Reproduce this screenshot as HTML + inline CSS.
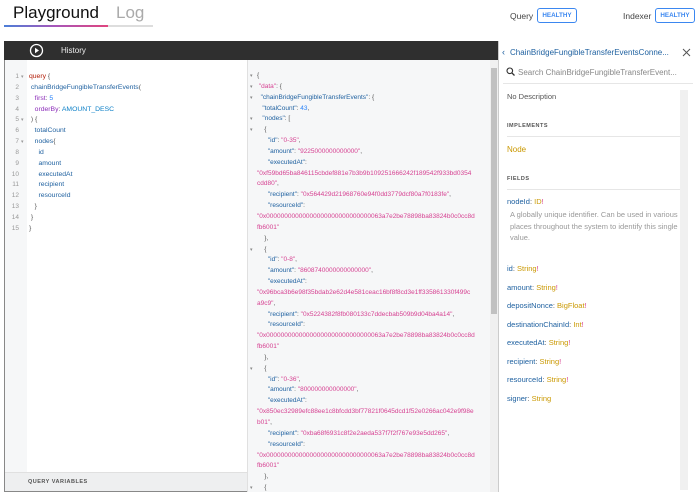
<!DOCTYPE html>
<html><head><meta charset="utf-8"><style>
*{margin:0;padding:0;box-sizing:border-box}
body{width:700px;height:493px;overflow:hidden;background:#fff;font-family:"Liberation Sans",sans-serif;position:relative}
.a{position:absolute;white-space:nowrap}
.ln{font-size:6.5px;line-height:10.85px}
.k{color:#b11a04}.f{color:#1f61a0}.ar{color:#8b2bb9}.en{color:#0b7fc7}.nm{color:#2882f9}
.s{color:#d64292}.rk{color:#1f61a0}.p{color:#555}
.num{color:#999}
.badge{position:absolute;height:15px;border:1px solid #3b87f0;border-radius:3px;color:#3b87f0;font-size:6.3px;font-weight:bold;line-height:13px;text-align:center;width:40px}
.dk{font-size:7.5px;color:#555}
.fn{color:#1f61a0}.ty{color:#ca9800}
</style></head><body>
<div class="a" style="left:13px;top:3px;font-size:17px;color:#111">Playground</div>
<div class="a" style="left:116px;top:3px;font-size:17px;color:#aaa">Log</div>
<div class="a" style="left:4px;top:25px;width:104px;height:2px;background:linear-gradient(90deg,#4b7fd8,#a855b8,#e0457e)"></div>
<div class="a" style="left:108px;top:25px;width:45px;height:2px;background:#ddd"></div>
<div class="a" style="left:510px;top:11px;font-size:8.5px;color:#444">Query</div>
<div class="badge" style="left:537px;top:8px">HEALTHY</div>
<div class="a" style="left:623px;top:11px;font-size:8.5px;color:#444">Indexer</div>
<div class="badge" style="left:655px;top:8px">HEALTHY</div>

<div class="a" style="left:4px;top:41px;width:690px;height:451px;border:1px solid #888;border-top:none"></div>
<div class="a" style="left:4px;top:41px;width:494px;height:19px;background:#2f2f2f"></div>
<svg class="a" style="left:29px;top:43px" width="15" height="15"><circle cx="7.5" cy="7.5" r="6" fill="none" stroke="#fff" stroke-width="1.3"/><path d="M6 4.8 L10 7.5 L6 10.2Z" fill="#fff"/></svg>
<div class="a" style="left:61px;top:46px;font-size:8px;color:#eee">History</div>

<div class="a" style="left:5px;top:60px;width:22px;height:412px;background:#f6f7f8"></div>
<div class="a" style="left:5px;top:472px;width:242px;height:19px;background:#eeeff0;border-top:1px solid #e0e0e0"></div>
<div class="a" style="left:28px;top:479px;font-size:5.5px;font-weight:bold;color:#555;letter-spacing:.5px">QUERY VARIABLES</div>

<div class="a ln num" style="left:5px;top:72px;width:14px;text-align:right">1<br>2<br>3<br>4<br>5<br>6<br>7<br>8<br>9<br>10<br>11<br>12<br>13<br>14<br>15</div>
<div class="a ln num" style="left:21px;top:72px;font-size:5px">▾<br><br><br><br>▾<br><br>▾</div>
<div class="a ln" style="left:29px;top:72px;font-size:6.8px">
<span class="k">query</span> <span class="p">{</span><br>
&nbsp;<span class="f">chainBridgeFungibleTransferEvents</span><span class="p">(</span><br>
&nbsp;&nbsp;&nbsp;<span class="ar">first</span><span class="p">:</span> <span class="nm">5</span><br>
&nbsp;&nbsp;&nbsp;<span class="ar">orderBy</span><span class="p">:</span> <span class="en">AMOUNT_DESC</span><br>
&nbsp;<span class="p">) {</span><br>
&nbsp;&nbsp;&nbsp;<span class="f">totalCount</span><br>
&nbsp;&nbsp;&nbsp;<span class="f">nodes</span><span class="p">{</span><br>
&nbsp;&nbsp;&nbsp;&nbsp;&nbsp;<span class="f">id</span><br>
&nbsp;&nbsp;&nbsp;&nbsp;&nbsp;<span class="f">amount</span><br>
&nbsp;&nbsp;&nbsp;&nbsp;&nbsp;<span class="f">executedAt</span><br>
&nbsp;&nbsp;&nbsp;&nbsp;&nbsp;<span class="f">recipient</span><br>
&nbsp;&nbsp;&nbsp;&nbsp;&nbsp;<span class="f">resourceId</span><br>
&nbsp;&nbsp;&nbsp;<span class="p">}</span><br>
&nbsp;<span class="p">}</span><br>
<span class="p">}</span></div>

<div class="a" style="left:247px;top:60px;width:243px;height:432px;background:#f6f7f8;border-left:1px solid #e0e0e0"></div>
<div class="a" style="left:490px;top:60px;width:8px;height:432px;background:#f0f0f0"></div>
<div class="a" style="left:491px;top:68px;width:6px;height:246px;background:#c1c1c1"></div>
<div class="a ln num" style="left:250px;top:71px;font-size:5px;color:#888">▾<br>▾<br>▾<br><br>▾<br>▾<br><br><br><br><br><br><br><br><br><br><br>▾<br><br><br><br><br><br><br><br><br><br><br>▾<br><br><br><br><br><br><br><br><br><br><br>▾</div>
<div class="a ln" style="left:257px;top:71px">
<span class="p">{</span><br>
&nbsp;<span class="s">"data"</span><span class="p">: {</span><br>
&nbsp;&nbsp;<span class="rk">"chainBridgeFungibleTransferEvents"</span><span class="p">: {</span><br>
&nbsp;&nbsp;&nbsp;<span class="rk">"totalCount"</span><span class="p">:</span> <span class="nm">43</span><span class="p">,</span><br>
&nbsp;&nbsp;&nbsp;<span class="rk">"nodes"</span><span class="p">: [</span><br>
&nbsp;&nbsp;&nbsp;&nbsp;<span class="p">{</span><br>
&nbsp;&nbsp;&nbsp;&nbsp;&nbsp;&nbsp;<span class="rk">"id"</span><span class="p">:</span> <span class="s">"0-35"</span><span class="p">,</span><br>
&nbsp;&nbsp;&nbsp;&nbsp;&nbsp;&nbsp;<span class="rk">"amount"</span><span class="p">:</span> <span class="s">"9225000000000000"</span><span class="p">,</span><br>
&nbsp;&nbsp;&nbsp;&nbsp;&nbsp;&nbsp;<span class="rk">"executedAt"</span><span class="p">:</span><br>
<span class="s">"0xf59bd65ba846115cbdef881e7b3b9b109251666242f189542f933bd0354</span><br>
<span class="s">cdd80"</span><span class="p">,</span><br>
&nbsp;&nbsp;&nbsp;&nbsp;&nbsp;&nbsp;<span class="rk">"recipient"</span><span class="p">:</span> <span class="s">"0x564429d21968760e94f0dd3779dcf80a7f0183fe"</span><span class="p">,</span><br>
&nbsp;&nbsp;&nbsp;&nbsp;&nbsp;&nbsp;<span class="rk">"resourceId"</span><span class="p">:</span><br>
<span class="s">"0x00000000000000000000000000000063a7e2be78898ba83824b0c0cc8d</span><br>
<span class="s">fb6001"</span><br>
&nbsp;&nbsp;&nbsp;&nbsp;<span class="p">},</span><br>
&nbsp;&nbsp;&nbsp;&nbsp;<span class="p">{</span><br>
&nbsp;&nbsp;&nbsp;&nbsp;&nbsp;&nbsp;<span class="rk">"id"</span><span class="p">:</span> <span class="s">"0-8"</span><span class="p">,</span><br>
&nbsp;&nbsp;&nbsp;&nbsp;&nbsp;&nbsp;<span class="rk">"amount"</span><span class="p">:</span> <span class="s">"8608740000000000000"</span><span class="p">,</span><br>
&nbsp;&nbsp;&nbsp;&nbsp;&nbsp;&nbsp;<span class="rk">"executedAt"</span><span class="p">:</span><br>
<span class="s">"0x96bca3b6e98f35bdab2e62d4e581ceac16bf8f8cd3e1ff335861330f499c</span><br>
<span class="s">a9c9"</span><span class="p">,</span><br>
&nbsp;&nbsp;&nbsp;&nbsp;&nbsp;&nbsp;<span class="rk">"recipient"</span><span class="p">:</span> <span class="s">"0x5224382f8fb080133c7ddecbab509b9d04ba4a14"</span><span class="p">,</span><br>
&nbsp;&nbsp;&nbsp;&nbsp;&nbsp;&nbsp;<span class="rk">"resourceId"</span><span class="p">:</span><br>
<span class="s">"0x00000000000000000000000000000063a7e2be78898ba83824b0c0cc8d</span><br>
<span class="s">fb6001"</span><br>
&nbsp;&nbsp;&nbsp;&nbsp;<span class="p">},</span><br>
&nbsp;&nbsp;&nbsp;&nbsp;<span class="p">{</span><br>
&nbsp;&nbsp;&nbsp;&nbsp;&nbsp;&nbsp;<span class="rk">"id"</span><span class="p">:</span> <span class="s">"0-36"</span><span class="p">,</span><br>
&nbsp;&nbsp;&nbsp;&nbsp;&nbsp;&nbsp;<span class="rk">"amount"</span><span class="p">:</span> <span class="s">"800000000000000"</span><span class="p">,</span><br>
&nbsp;&nbsp;&nbsp;&nbsp;&nbsp;&nbsp;<span class="rk">"executedAt"</span><span class="p">:</span><br>
<span class="s">"0x850ec32989efc88ee1c8bfcdd3bf77821f0645dcd1f52e0266ac042e9f98e</span><br>
<span class="s">b01"</span><span class="p">,</span><br>
&nbsp;&nbsp;&nbsp;&nbsp;&nbsp;&nbsp;<span class="rk">"recipient"</span><span class="p">:</span> <span class="s">"0xba68f6931c8f2e2aeda537f7f2f767e93e5dd265"</span><span class="p">,</span><br>
&nbsp;&nbsp;&nbsp;&nbsp;&nbsp;&nbsp;<span class="rk">"resourceId"</span><span class="p">:</span><br>
<span class="s">"0x00000000000000000000000000000063a7e2be78898ba83824b0c0cc8d</span><br>
<span class="s">fb6001"</span><br>
&nbsp;&nbsp;&nbsp;&nbsp;<span class="p">},</span><br>
&nbsp;&nbsp;&nbsp;&nbsp;<span class="p">{</span></div>

<div class="a" style="left:498px;top:41px;width:196px;height:451px;background:#fff;border-left:1px solid #ccc"></div>
<div class="a" style="left:502px;top:47px;font-size:9px;color:#1f61a0">‹</div>
<div class="a" style="left:510px;top:48px;font-size:8px;color:#1f61a0">ChainBridgeFungibleTransferEventsConne...</div>
<svg class="a" style="left:682px;top:48px" width="9" height="9"><path d="M1 1L8 8M8 1L1 8" stroke="#555" stroke-width="1"/></svg>
<svg class="a" style="left:506px;top:67px" width="9" height="9"><circle cx="3.8" cy="3.8" r="2.8" fill="none" stroke="#333" stroke-width="1.1"/><path d="M5.8 5.8L8.5 8.5" stroke="#333" stroke-width="1.3"/></svg>
<div class="a" style="left:518px;top:68px;font-size:8px;color:#888">Search ChainBridgeFungibleTransferEvent...</div>
<div class="a" style="left:503px;top:83px;width:190px;height:1px;background:#e6e6e6"></div>
<div class="a" style="left:680px;top:90px;width:8px;height:400px;background:#f0f0f0"></div>
<div class="a dk" style="left:507px;top:92px">No Description</div>
<div class="a" style="left:507px;top:123px;font-size:5.5px;font-weight:bold;color:#555;letter-spacing:.5px">IMPLEMENTS</div>
<div class="a" style="left:507px;top:136px;width:173px;height:1px;background:#e6e6e6"></div>
<div class="a" style="left:507px;top:145px;font-size:8px;color:#ca9800">Node</div>
<div class="a" style="left:507px;top:176px;font-size:5.5px;font-weight:bold;color:#555;letter-spacing:.5px">FIELDS</div>
<div class="a" style="left:507px;top:189px;width:173px;height:1px;background:#e6e6e6"></div>
<div class="a dk" style="left:507px;top:197px"><span class="fn">nodeId</span>: <span class="ty">ID</span><span style="color:#d64292">!</span></div>
<div class="a" style="left:510px;top:209px;font-size:7.5px;color:#999;line-height:11.5px;white-space:normal;width:170px">A globally unique identifier. Can be used in various places throughout the system to identify this single value.</div>
<div class="a dk" style="left:507px;top:260px;line-height:18.5px"><span class="fn">id</span>: <span class="ty">String</span><span style="color:#d64292">!</span><br><span class="fn">amount</span>: <span class="ty">String</span><span style="color:#d64292">!</span><br><span class="fn">depositNonce</span>: <span class="ty">BigFloat</span><span style="color:#d64292">!</span><br><span class="fn">destinationChainId</span>: <span class="ty">Int</span><span style="color:#d64292">!</span><br><span class="fn">executedAt</span>: <span class="ty">String</span><span style="color:#d64292">!</span><br><span class="fn">recipient</span>: <span class="ty">String</span><span style="color:#d64292">!</span><br><span class="fn">resourceId</span>: <span class="ty">String</span><span style="color:#d64292">!</span><br><span class="fn">signer</span>: <span class="ty">String</span></div>
</body></html>
